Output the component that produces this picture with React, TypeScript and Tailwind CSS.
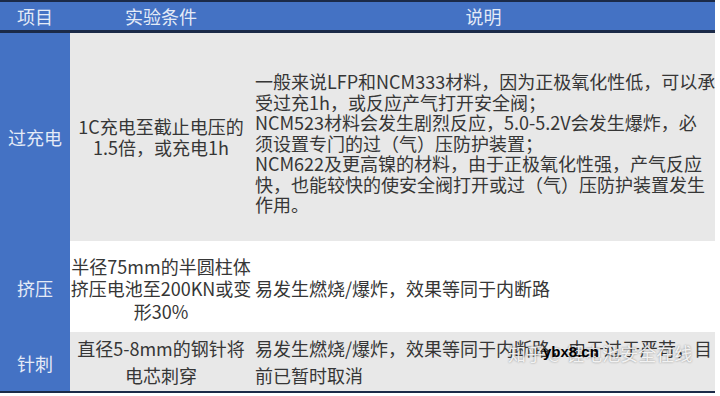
const font = "font-['Noto_Sans_CJK_SC','Noto_Sans',sans-serif]";

const overcharge = [
  "一般来说LFP和NCM333材料，因为正极氧化性低，可以承",
  "受过充1h，或反应产气打开安全阀；",
  "NCM523材料会发生剧烈反应，5.0-5.2V会发生爆炸，必",
  "须设置专门的过（气）压防护装置；",
  "NCM622及更高镍的材料，由于正极氧化性强，产气反应",
  "快，也能较快的使安全阀打开或过（气）压防护装置发生",
  "作用。",
];

function Lines({ lines }: { lines: string[] }) {
  return (
    <>
      {lines.map((l) => (
        <div key={l} className="whitespace-nowrap">
          {l}
        </div>
      ))}
    </>
  );
}

export default function App() {
  return (
    <div className={`relative w-[720px] h-[396px] bg-white overflow-hidden text-[18px] ${font}`}>
      <div className="w-[715px] border-t-2 border-b-2 border-[#1b2a48]">
        {/* header */}
        <div className="grid grid-cols-[70px_182px_1fr] h-[31px] bg-[#4472c4] border-b-[3px] border-[#1b2a48] text-[#e4ebf7] leading-[28px]">
          <div className="text-center">项目</div>
          <div className="text-center">实验条件</div>
          <div className="text-center">说明</div>
        </div>

        {/* 过充电 */}
        <div className="grid grid-cols-[70px_182px_1fr] h-[208px] bg-[#e8e8e8] text-[#363636]">
          <div className="bg-[#4472c4] text-[#e4ebf7] flex items-center justify-center">过充电</div>
          <div className="flex flex-col items-center justify-center text-center leading-[21px]">
            <Lines lines={["1C充电至截止电压的", "1.5倍，或充电1h"]} />
          </div>
          <div className="flex flex-col justify-center pl-[3px] pt-[12px] leading-[20.5px]">
            <Lines lines={overcharge} />
          </div>
        </div>

        {/* 挤压 */}
        <div className="grid grid-cols-[70px_182px_1fr] h-[91px] bg-white text-[#363636]">
          <div className="bg-[#4472c4] text-[#e4ebf7] flex items-center justify-center pt-1">挤压</div>
          <div className="flex flex-col items-center justify-center text-center pt-1 leading-[22.5px]">
            <Lines lines={["半径75mm的半圆柱体", "挤压电池至200KN或变", "形30%"]} />
          </div>
          <div className="flex flex-col justify-center pl-[3px] pt-1">
            <Lines lines={["易发生燃烧/爆炸，效果等同于内断路"]} />
          </div>
        </div>

        {/* 针刺 */}
        <div className="grid grid-cols-[70px_182px_1fr] h-[59px] bg-[#e8e8e8] text-[#363636]">
          <div className="bg-[#4472c4] text-[#e4ebf7] flex items-center justify-center pt-1">针刺</div>
          <div className="flex flex-col items-center justify-center text-center leading-[27px]">
            <Lines lines={["直径5-8mm的钢针将", "电芯刺穿"]} />
          </div>
          <div className="flex flex-col justify-center pl-[3px] leading-[27px]">
            <Lines lines={["易发生燃烧/爆炸，效果等同于内断路，由于过于严苛，目", "前已暂时取消"]} />
          </div>
        </div>
      </div>

      {/* watermark */}
      <div className="absolute left-[508px] top-[340px] flex items-center gap-1 text-[18px] text-white/85 [text-shadow:0_0_2px_rgba(0,0,0,0.45)] whitespace-nowrap">
        <span>知乎</span>
        <span className="text-[15px]">@</span>
        <span>锂电池安全在线</span>
      </div>
      <div className="absolute left-[543px] top-[342px] text-[15px] font-bold text-black font-['Liberation_Sans',sans-serif] leading-[20px]">
        ybx8.cn
      </div>
    </div>
  );
}
